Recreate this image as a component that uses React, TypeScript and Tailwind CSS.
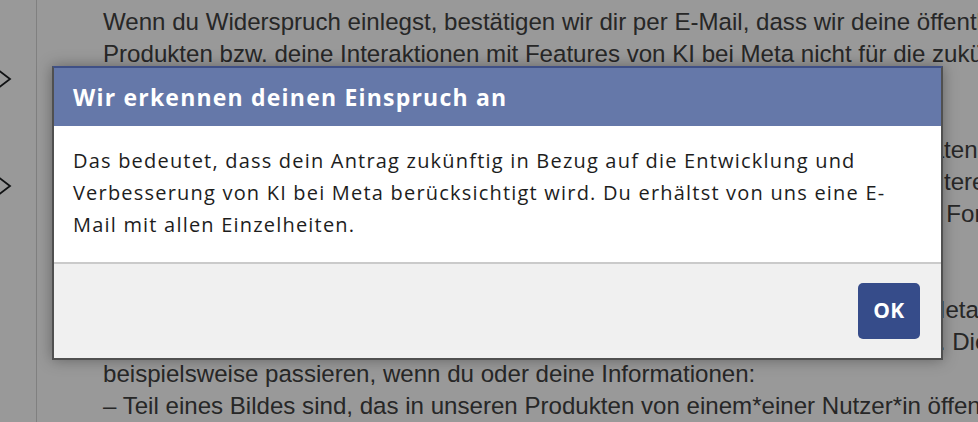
const PAGE_LINES = [
  'Wenn du Widerspruch einlegst, bestätigen wir dir per E-Mail, dass wir deine öffentlichen Informationen aus',
  'Produkten bzw. deine Interaktionen mit Features von KI bei Meta nicht für die zukünftige Entwicklung und',
  'Verbesserung von KI bei Meta verwenden.',
  '',
  'Wir nutzen deine Informationen dennoch weiterhin im gesetzlich zulässigen Datenumfang',
  'sowie für übrige Zwecke, die in unserer Datenschutzrichtlinie erwähnt sind, weitere',
  'Informationen über dich verarbeiten. Weitere Details dazu findest du in diesem Formular',
  'nachlesen.',
  '',
  'Diese Informationen könnten aber selbst dann für die Entwicklung von KI bei Meta',
  'verwendet werden, wenn du nie Produkte von Meta nutzt oder kein Konto hast. Dies kann',
  'beispielsweise passieren, wenn du oder deine Informationen:',
  '– Teil eines Bildes sind, das in unseren Produkten von einem*einer Nutzer*in öffentlich geteilt wurde',
]

function Chevron() {
  return (
    <svg width="14" height="20" viewBox="0 0 14 20" className="-ml-[2px]">
      <polyline points="1,1.5 12,10 1,18.5" fill="none" stroke="#1c1e21" strokeWidth="1.8" />
    </svg>
  )
}

export default function App() {
  return (
    <div className="relative w-[978px] h-[422px] overflow-hidden bg-white flex">
      {/* page behind the dialog */}
      <div className="w-[37px] shrink-0 border-r border-[#d6d6d6] flex flex-col pt-[69px] gap-[87px]">
        <Chevron />
        <Chevron />
      </div>
      <div
        className="flex-1 pl-[66px] pt-[6px] text-[24.1px] leading-[32px] text-[#424242] whitespace-nowrap overflow-hidden"
        style={{ fontFamily: "'Liberation Sans', Arial, sans-serif" }}
      >
        {PAGE_LINES.map((line, i) => (
          <div key={i} className="h-[32px]">{line}</div>
        ))}
      </div>

      {/* dim overlay */}
      <div className="absolute inset-0 bg-black/40" />

      {/* dialog */}
      <div
        className="absolute left-[52px] top-[66px] w-[891px] border-2 border-[#505050] border-t-[#3f5086] bg-white shadow-[0_0_14px_rgba(0,0,0,0.35)]"
        style={{ fontFamily: "'Open Sans', 'Noto Sans', sans-serif" }}
      >
        <div className="h-[58px] bg-[#6578a9] flex items-center px-[19px]">
          <h2 className="text-[23px] font-bold text-white tracking-[1.2px]">Wir erkennen deinen Einspruch an</h2>
        </div>
        <div className="h-[136px] pt-[19px] px-[19px] text-[20px] leading-[32px] tracking-[1.2px] text-[#1d1d1d]">
          Das bedeutet, dass dein Antrag zukünftig in Bezug auf die Entwicklung und
          <br />
          Verbesserung von KI bei Meta berücksichtigt wird. Du erhältst von uns eine E-
          <br />
          Mail mit allen Einzelheiten.
        </div>
        <div className="h-[96px] bg-[#f0f0f0] border-t-2 border-[#cacaca] flex justify-end pt-[19px] pr-[21px]">
          <button className="w-[62px] h-[56px] rounded-[5px] bg-[#364c8a] text-white text-[21px] font-bold tracking-[0.5px]">
            OK
          </button>
        </div>
      </div>
    </div>
  )
}
